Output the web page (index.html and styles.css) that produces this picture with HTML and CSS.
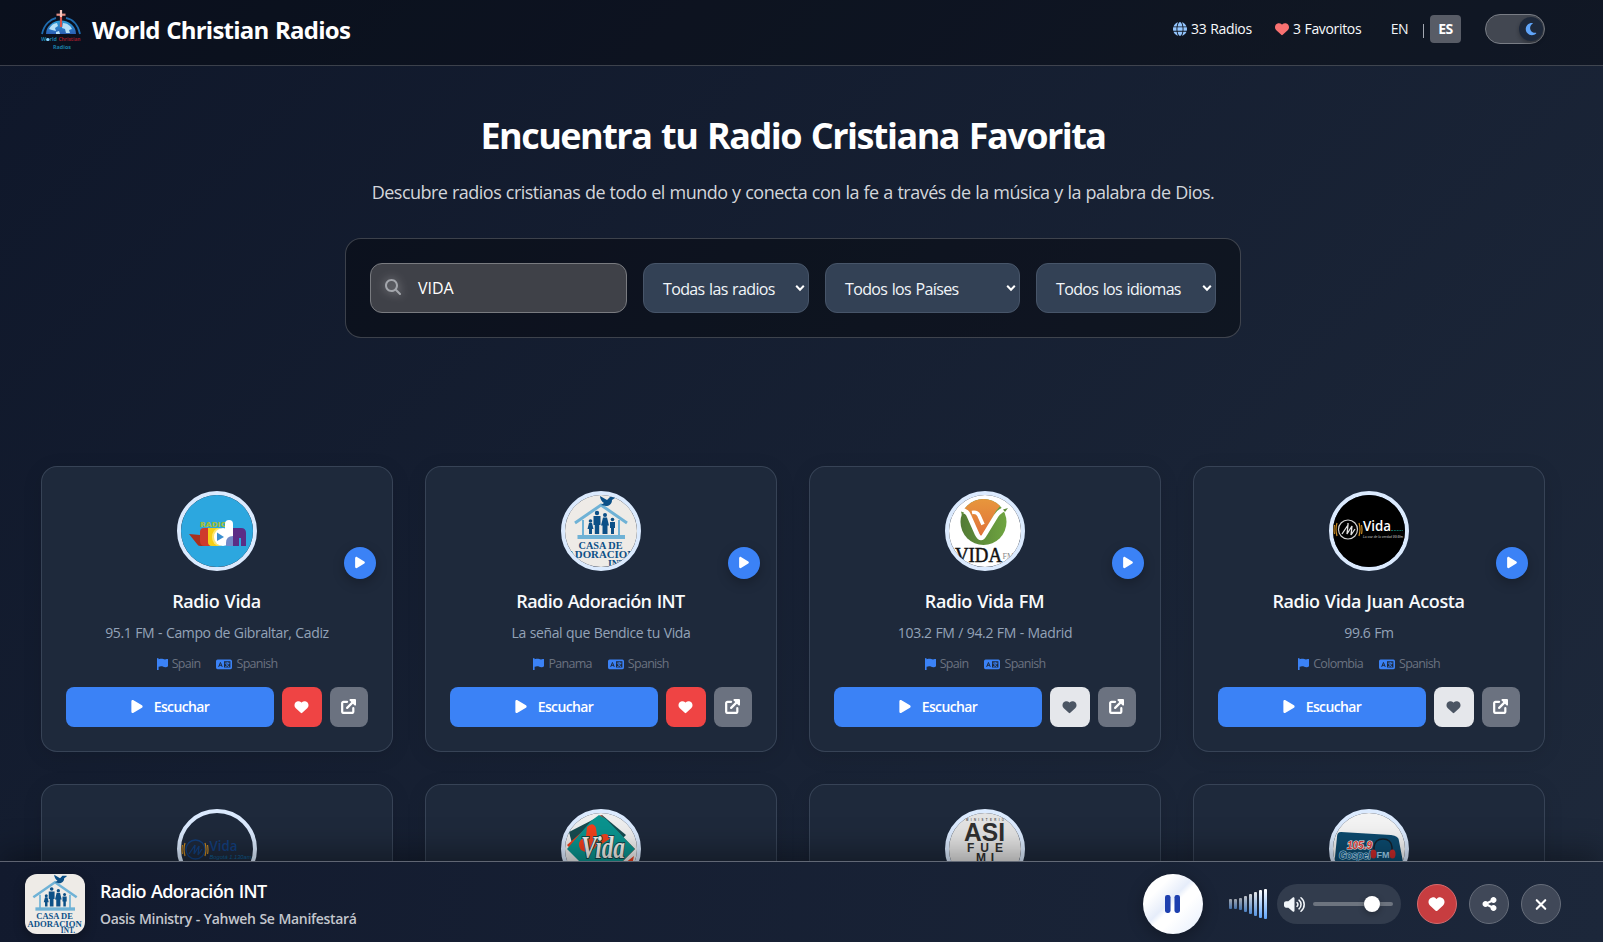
FILE: index.html
```html
<!DOCTYPE html>
<html lang="es">
<head>
<meta charset="utf-8">
<title>World Christian Radios</title>
<link rel="stylesheet" href="styles.css">
</head>
<body>
<svg class="defs" width="0" height="0" aria-hidden="true">
  <defs>
    <linearGradient id="sun" x1="0" y1="0" x2="0" y2="1"><stop offset="0" stop-color="#e89a3c"/><stop offset="1" stop-color="#e0703a"/></linearGradient>
    <linearGradient id="leaf"><stop offset="0" stop-color="#527a35"/><stop offset="1" stop-color="#6fa541"/></linearGradient>
    <linearGradient id="globe-fill" x1="0" y1="0" x2="0" y2="1"><stop offset="0" stop-color="#2a9fd9"/><stop offset="1" stop-color="#2c5fb4"/></linearGradient>
    <clipPath id="vf-disc"><circle cx="34.500" cy="27" r="23"/></clipPath>
  </defs>
  <symbol id="i-heart" viewBox="0 0 512 512"><path d="M47.6 300.4L228.3 469.1c7.5 7 17.4 10.9 27.7 10.9s20.2-3.9 27.7-10.9L464.4 300.4c30.4-28.3 47.6-68 47.6-109.5v-5.8c0-69.9-50.5-129.5-119.4-141C347 36.5 300.6 51.4 268 84L256 96 244 84c-32.6-32.6-79-47.5-124.6-39.9C50.5 55.6 0 115.2 0 185.1v5.8c0 41.5 17.2 81.2 47.6 109.5z"/></symbol>
  <symbol id="i-play" viewBox="0 0 384 512"><path d="M73 39c-14.8-9.1-33.4-9.4-48.5-.9S0 62.6 0 80V432c0 17.4 9.4 33.4 24.5 41.9s33.7 8.1 48.5-.9L361 297c14.3-8.7 23-24.2 23-41s-8.7-32.2-23-41L73 39z"/></symbol>
  <symbol id="i-globe" viewBox="0 0 512 512"><path d="M352 256c0 22.2-1.2 43.6-3.3 64H163.3c-2.2-20.4-3.3-41.8-3.3-64s1.2-43.6 3.3-64H348.7c2.2 20.4 3.3 41.8 3.3 64zm28.8-64H503.9c5.3 20.5 8.1 41.9 8.1 64s-2.8 43.5-8.1 64H380.8c2.1-20.6 3.2-42 3.2-64s-1.1-43.4-3.2-64zm112.6-32H376.7c-10-63.9-29.8-117.4-55.3-151.6c78.3 20.7 142 77.5 171.9 151.6zm-149.1 0H167.7c6.1-36.4 15.5-68.6 27-94.7c10.5-23.6 22.2-40.7 33.5-51.5C239.4 3.2 248.7 0 256 0s16.6 3.2 27.8 13.8c11.3 10.8 23 27.9 33.5 51.5c11.6 26 20.9 58.2 27 94.7zm-209 0H18.6C48.6 85.9 112.2 29.1 190.6 8.4C165.1 42.6 145.3 96.1 135.3 160zM8.1 192H131.2c-2.1 20.6-3.2 42-3.2 64s1.1 43.4 3.2 64H8.1C2.8 299.5 0 278.1 0 256s2.8-43.5 8.1-64zM194.7 446.6c-11.6-26-20.9-58.2-27-94.6H344.3c-6.1 36.4-15.5 68.6-27 94.6c-10.5 23.6-22.2 40.7-33.5 51.5C272.6 508.8 263.3 512 256 512s-16.6-3.2-27.8-13.8c-11.3-10.8-23-27.9-33.5-51.5zM135.3 352c10 63.9 29.8 117.4 55.3 151.6C112.2 482.9 48.6 426.1 18.6 352H135.3zm358.1 0c-30 74.1-93.6 130.9-171.9 151.6c25.5-34.2 45.2-87.7 55.3-151.6H493.4z"/></symbol>
  <symbol id="i-moon" viewBox="0 0 384 512"><path d="M223.5 32C100 32 0 132.3 0 256S100 480 223.5 480c60.6 0 115.5-24.2 155.8-63.4c5-4.9 6.3-12.5 3.1-18.7s-10.1-9.7-17-8.5c-9.8 1.7-19.8 2.6-30.1 2.6c-96.9 0-175.5-78.8-175.5-176c0-65.8 36-123.1 89.3-153.3c6.1-3.5 9.2-10.5 7.7-17.3s-7.3-11.9-14.3-12.5c-6.3-.5-12.6-.8-19-.8z"/></symbol>
  <symbol id="i-search" viewBox="0 0 512 512"><path d="M416 208c0 45.9-14.9 88.3-40 122.7L502.6 457.4c12.5 12.5 12.5 32.8 0 45.3s-32.8 12.5-45.3 0L330.7 376c-34.4 25.2-76.8 40-122.7 40C93.1 416 0 322.9 0 208S93.1 0 208 0S416 93.1 416 208zM208 352a144 144 0 1 0 0-288 144 144 0 1 0 0 288z"/></symbol>
  <symbol id="i-flag" viewBox="0 0 448 512"><path d="M64 32C64 14.3 49.7 0 32 0S0 14.3 0 32V480c0 17.7 14.3 32 32 32s32-14.3 32-32V352l64.3-16.1c41.1-10.3 84.6-5.5 122.5 13.4c44.2 22.1 95.5 24.8 141.7 7.4l34.7-13c12.5-4.7 20.8-16.6 20.8-30V66.1c0-23-24.2-38-44.8-27.7l-9.6 4.8c-46.3 23.2-100.8 23.2-147.1 0c-35.1-17.6-75.4-22-113.5-12.5L64 48V32z"/></symbol>
  <symbol id="i-lang" viewBox="0 0 640 512"><path fill-rule="evenodd" d="M64 64h512a64 64 0 0 1 64 64v256a64 64 0 0 1-64 64H64a64 64 0 0 1-64-64V128a64 64 0 0 1 64-64zM320 128v256h256V128z"/><path d="M112 342l66-164 66 164M138 292h80" fill="none" stroke="#1e293b" stroke-width="38" stroke-linecap="round"/><path d="M368 206h160M448 172v30M500 210c-18 66-58 112-114 134M408 258c22 40 58 68 104 84" fill="none" stroke="currentColor" stroke-width="38" stroke-linecap="round"/></symbol>
  <symbol id="i-ext" viewBox="0 0 512 512"><path d="M208 96H84a44 44 0 0 0-44 44v292a44 44 0 0 0 44 44h292a44 44 0 0 0 44-44V312M210 302L430 82" fill="none" stroke="currentColor" stroke-width="76" stroke-linecap="round"/><path d="M320 0h160a32 32 0 0 1 32 32v160c0 28-34 42-54 22L298 54c-20-20-6-54 22-54z"/></symbol>
  <symbol id="i-share" viewBox="0 0 448 512"><path d="M352 224c53 0 96-43 96-96s-43-96-96-96s-96 43-96 96c0 4 .2 8 .7 11.9l-94.1 47C145.4 170.2 121.9 160 96 160c-53 0-96 43-96 96s43 96 96 96c25.9 0 49.4-10.2 66.6-26.9l94.1 47c-.5 3.9-.7 7.8-.7 11.9c0 53 43 96 96 96s96-43 96-96s-43-96-96-96c-25.9 0-49.4 10.2-66.6 26.9l-94.1-47c.5-3.9 .7-7.8 .7-11.9s-.2-8-.7-11.9l94.1-47C302.6 213.8 326.1 224 352 224z"/></symbol>
  <symbol id="i-volume" viewBox="0 0 640 512"><path d="M301.1 34.8C312.6 40 320 51.4 320 64V448c0 12.6-7.4 24-18.9 29.2s-25 3.1-34.4-5.3L131.8 352H64c-35.3 0-64-28.7-64-64V224c0-35.3 28.7-64 64-64h67.8L266.7 40.1c9.4-8.4 22.9-10.4 34.4-5.3z"/><path d="M397 199a74 74 0 0 1 0 114M458 125a170 170 0 0 1 0 262M518 50a266 266 0 0 1 0 412" fill="none" stroke="currentColor" stroke-width="48" stroke-linecap="round"/></symbol>
  <symbol id="i-pause" viewBox="0 0 320 512"><rect y="64" width="118" height="384" rx="46"/><rect x="202" y="64" width="118" height="384" rx="46"/></symbol>
  <symbol id="i-x" viewBox="0 0 384 512"><path d="M64 128l256 256M320 128L64 384" fill="none" stroke="currentColor" stroke-width="64" stroke-linecap="round"/></symbol>
  <symbol id="casa" viewBox="0 0 72 72">
    <rect width="72" height="72" fill="#eeebe7"/>
    <path d="M10 28L36 10l26 18" fill="none" stroke="#6fb2d6" stroke-width="3"/>
    <path d="M18 25v17M54 25v17" stroke="#6fb2d6" stroke-width="2"/>
    <rect x="12.500" y="40" width="47.500" height="4" fill="#6fb2d6"/>
    <g fill="#0c5087"><path d="M35 1l7 4 3-3h5v1l-3 2c0 4-3 6-6 6l-5-1 3-2c-2-1-4-4-4-7z"/>
      <circle cx="32" cy="18" r="2.200"/><path d="M28.500 21h7v9h-1.300v9h-4.400v-9h-1.300z"/>
      <circle cx="40" cy="20" r="2"/><path d="M38 22.500h4l2 8h-1.500v8.500h-5v-8.500H36z"/>
      <circle cx="25.500" cy="26" r="1.800"/><path d="M24 28h3l1.500 6h-1.500v5h-3v-5h-1.500z"/>
      <circle cx="47.500" cy="24.500" r="1.800"/><path d="M45 27h5v6h-1v6h-3v-6h-1z"/></g>
  </symbol>
</svg>

<header class="topbar">
  <div class="brand">
    <svg class="brand-logo" viewBox="0 0 40 40">
      <path d="M5 24a15 13.500 0 0 1 30 0z" fill="url(#globe-fill)"/>
      <path d="M8 19c2-4 5-6 8-6l1 3-3 2 1 3-4-1zM22 13c4 0 8 3 9 6l-3 1 1 3h-4l-1-4-3-1zM15 22l3-1 1 3h-4z" fill="#b6e0f6"/>
      <path d="M1 24C3 14 10 9 15 8M39 24C37 14 31 9 25 8" fill="none" stroke="#1e6bae" stroke-width="1.800"/>
      <path d="M20 4v13" stroke="#d4554c" stroke-width="2.200"/><path d="M15.500 4.700h9" stroke="#e58f84" stroke-width="2.200"/><path d="M20 0v7" stroke="#f2c6be" stroke-width="2.200"/>
      <text x="0" y="31.200" class="logo-a" textLength="16" lengthAdjust="spacingAndGlyphs">World</text><circle cx="6.800" cy="29.500" r="1.600" fill="#8fd6ff"/>
      <text x="17.500" y="31.200" class="logo-b" textLength="22" lengthAdjust="spacingAndGlyphs">Christian</text>
      <text x="12" y="38.600" class="logo-a" textLength="18" lengthAdjust="spacingAndGlyphs">Radios</text>
    </svg>
    <span class="brand-name">World Christian Radios</span>
  </div>
  <nav class="top-actions">
    <span class="stat"><svg class="ic-globe"><use href="#i-globe"/></svg>33 Radios</span>
    <span class="stat fav"><svg class="ic-fav"><use href="#i-heart"/></svg>3 Favoritos</span>
    <div class="langs"><span class="lang">EN</span><span class="sep"></span><span class="lang on">ES</span></div>
    <div class="toggle"><span class="knob"><svg><use href="#i-moon"/></svg></span></div>
  </nav>
</header>

<main class="page">
  <section class="hero">
    <h1>Encuentra tu Radio Cristiana Favorita</h1>
    <p>Descubre radios cristianas de todo el mundo y conecta con la fe a través de la música y la palabra de Dios.</p>
    <div class="panel">
      <div class="search"><svg><use href="#i-search"/></svg><span>VIDA</span></div>
      <div class="select s1"><span>Todas las radios</span><svg class="chev" viewBox="0 0 10 8"><path d="M1.200 1.800L5 5.800l3.800-4"/></svg></div>
      <div class="select s2"><span>Todos los Países</span><svg class="chev" viewBox="0 0 10 8"><path d="M1.200 1.800L5 5.800l3.800-4"/></svg></div>
      <div class="select s3"><span>Todos los idiomas</span><svg class="chev" viewBox="0 0 10 8"><path d="M1.200 1.800L5 5.800l3.800-4"/></svg></div>
    </div>
  </section>

  <section class="grid">
    <article class="card">
      <div class="avatar"><svg viewBox="0 0 72 72"><rect width="72" height="72" fill="#2ca7df"/>
        <text x="19" y="31.500" class="v-radio" textLength="27" lengthAdjust="spacingAndGlyphs">RADIO</text>
        <path d="M8 39l11 1 5 11h-5q-2 0-3-2z" fill="#a8301f"/><path d="M19 37q0-4 4-4h6v18h-5q-5 0-5-5z" fill="#cf3a2c"/><path d="M27 33h10v18h-6q-4 0-4-4z" fill="#f6cf16"/><ellipse cx="38" cy="42" rx="7" ry="9" fill="#fbe774"/><circle cx="42" cy="42" r="9" fill="#fff"/><rect x="44" y="25" width="8" height="26" rx="4" fill="#fff"/><path d="M36 37.500l7 4.500-7 4z" fill="#3a8fd0"/><path d="M45 51v-3q0-7 7-7v10z" fill="#7389c8"/><path d="M52 33h8q5 0 5 5v13H52z" fill="#5b2d86"/><path d="M59 43v8" stroke="#2ca7df" stroke-width="2"/></svg></div>
      <button class="quick"><svg><use href="#i-play"/></svg></button>
      <h3>Radio Vida</h3><p class="desc">95.1 FM - Campo de Gibraltar, Cadiz</p>
      <div class="meta"><span><svg class="ic-flag"><use href="#i-flag"/></svg>Spain</span><span><svg class="ic-lang"><use href="#i-lang"/></svg>Spanish</span></div>
      <div class="row"><button class="listen"><svg><use href="#i-play"/></svg>Escuchar</button><button class="like on"><svg><use href="#i-heart"/></svg></button><button class="ext"><svg><use href="#i-ext"/></svg></button></div>
    </article>
    <article class="card">
      <div class="avatar"><svg viewBox="0 0 72 72"><use href="#casa"/>
        <text x="13.500" y="54" class="c-txt" textLength="44" lengthAdjust="spacingAndGlyphs">CASA DE</text><text x="2" y="63" class="c-txt" textLength="68" lengthAdjust="spacingAndGlyphs">ADORACION</text><text x="43" y="71.500" class="c-txt" textLength="19" lengthAdjust="spacingAndGlyphs">INT.</text></svg></div>
      <button class="quick"><svg><use href="#i-play"/></svg></button>
      <h3 class="tight">Radio Adoración INT</h3><p class="desc">La señal que Bendice tu Vida</p>
      <div class="meta"><span><svg class="ic-flag"><use href="#i-flag"/></svg>Panama</span><span><svg class="ic-lang"><use href="#i-lang"/></svg>Spanish</span></div>
      <div class="row"><button class="listen"><svg><use href="#i-play"/></svg>Escuchar</button><button class="like on"><svg><use href="#i-heart"/></svg></button><button class="ext"><svg><use href="#i-ext"/></svg></button></div>
    </article>
    <article class="card">
      <div class="avatar"><svg viewBox="0 0 72 72"><rect width="72" height="72" fill="#fff"/>
        <g clip-path="url(#vf-disc)"><rect x="11" y="4" width="47" height="46" fill="url(#leaf)"/><path d="M10 0h50L47 16 32 44 20 17 10 12z" fill="url(#sun)"/></g>
        <path d="M12 16q6-1 8 5l8 18q4 8 8 0l11-18q5-7 12-8" fill="none" stroke="#fff" stroke-width="4.600"/>
        <path d="M23 17.500q5-1 7 3l4 9" fill="none" stroke="#fff" stroke-width="3.600"/>
        <path d="M12 16.500l3 1-2 3zM54 14.500l5-1.500-3 4z" fill="#5f8c3a"/>
        <text x="6" y="67" class="vf-txt" textLength="47" lengthAdjust="spacingAndGlyphs">VIDA</text><text x="53.500" y="64" class="vf-fm">FM</text></svg></div>
      <button class="quick"><svg><use href="#i-play"/></svg></button>
      <h3>Radio Vida FM</h3><p class="desc">103.2 FM / 94.2 FM - Madrid</p>
      <div class="meta"><span><svg class="ic-flag"><use href="#i-flag"/></svg>Spain</span><span><svg class="ic-lang"><use href="#i-lang"/></svg>Spanish</span></div>
      <div class="row"><button class="listen"><svg><use href="#i-play"/></svg>Escuchar</button><button class="like"><svg><use href="#i-heart"/></svg></button><button class="ext"><svg><use href="#i-ext"/></svg></button></div>
    </article>
    <article class="card">
      <div class="avatar"><svg viewBox="0 0 72 72"><rect width="72" height="72" fill="#000"/>
        <circle cx="15" cy="34.500" r="9.500" fill="none" stroke="#d0d0d0" stroke-width="1.200"/><path d="M9 39l6-9-1 9 5-8-1 9 4-6M15 28v2" fill="none" stroke="#e4e4e4" stroke-width="1.300"/>
        <path d="M4 28q-2 6 0 13M1.500 30q-1 5 0 9M26 28q2 6 0 13M28.500 30q1 5 0 9" fill="none" stroke="#c98a22" stroke-width="1.200"/>
        <text x="30" y="35.500" class="j-txt" textLength="28" lengthAdjust="spacingAndGlyphs">Vida</text><path d="M58 35.500h12" stroke="#0e6b60" stroke-width="1.200" stroke-dasharray="2 .8"/>
        <text x="30" y="42.500" class="j-sub" textLength="40" lengthAdjust="spacingAndGlyphs">La voz de la verdad 99.6fm</text></svg></div>
      <button class="quick"><svg><use href="#i-play"/></svg></button>
      <h3>Radio Vida Juan Acosta</h3><p class="desc">99.6 Fm</p>
      <div class="meta"><span><svg class="ic-flag"><use href="#i-flag"/></svg>Colombia</span><span><svg class="ic-lang"><use href="#i-lang"/></svg>Spanish</span></div>
      <div class="row"><button class="listen"><svg><use href="#i-play"/></svg>Escuchar</button><button class="like"><svg><use href="#i-heart"/></svg></button><button class="ext"><svg><use href="#i-ext"/></svg></button></div>
    </article>

    <article class="card">
      <div class="avatar"><svg viewBox="0 0 72 72">
        <circle cx="14.500" cy="36.500" r="9.500" fill="none" stroke="#123f7d" stroke-width="1.300"/><path d="M8 41l6-9-1 9 5-8-1 9 4-6" fill="none" stroke="#123f7d" stroke-width="1.300"/>
        <path d="M4 30q-2 6 0 13M1.500 32q-1 5 0 9M24 30q2 6 0 13M26.500 32q1 5 0 9" fill="none" stroke="#c98a22" stroke-width="1.200"/>
        <text x="28.500" y="38" class="b-txt" textLength="28" lengthAdjust="spacingAndGlyphs">Vida</text><text x="28.500" y="45.500" class="b-sub" textLength="42" lengthAdjust="spacingAndGlyphs">Bogotá 1.130am</text></svg></div>
    </article>
    <article class="card">
      <div class="avatar"><svg viewBox="0 0 72 72"><rect width="72" height="72" fill="#eee"/>
        <path d="M4 19L37 2l24 20-8 8L8 34z" fill="#164b50"/><path d="M2 32L36 2l34 34-34 34z" fill="#f0401c"/><path d="M2 36L26 8 34 2l7 4 29 30-34 34z" fill="#0a938e"/>
        <path d="M22 14q6-6 9 1l2 16q-8 12-17 6-6-8 5-14zM34 23q8-5 12 2l-12 8z" fill="#f0401c"/><path d="M60 50l9-7-3 14-9-1z" fill="#f0401c"/>
        <text x="16" y="45" class="t-txt" textLength="44" lengthAdjust="spacingAndGlyphs">Vida</text></svg></div>
    </article>
    <article class="card">
      <div class="avatar"><svg viewBox="0 0 72 72"><rect width="72" height="72" fill="#e3e3e3"/>
        <text x="17" y="8" class="a-min" textLength="38">MINISTERIO</text>
        <text x="15" y="28" class="a-asi" textLength="41" lengthAdjust="spacingAndGlyphs">ASI</text><text x="18" y="38.500" class="a-fue" textLength="36">FUE</text><text x="27" y="49" class="a-fue" textLength="18">MI</text></svg></div>
    </article>
    <article class="card">
      <div class="avatar"><svg viewBox="0 0 72 72"><rect width="72" height="72" fill="#f3f3f3"/>
        <path d="M8 19l50 3q8 1 8 6l5 26H1l3-30q0-5 4-5z" fill="#0c4a6e"/>
        <text x="14" y="36" class="g-num" textLength="25" lengthAdjust="spacingAndGlyphs">105.9</text>
        <text x="6" y="46" class="g-gos" textLength="32" lengthAdjust="spacingAndGlyphs">Gospel</text>
        <path d="M41 40V34q1-8 9-8t9 8v6" fill="none" stroke="#15202b" stroke-width="1.500"/><ellipse cx="40.500" cy="41" rx="3" ry="4.500" fill="#c92a2a"/><ellipse cx="59.500" cy="41" rx="3" ry="4.500" fill="#c92a2a"/>
        <text x="43.500" y="44.500" class="g-fm" textLength="13" lengthAdjust="spacingAndGlyphs">FM</text></svg></div>
    </article>
  </section>
</main>

<footer class="player">
  <svg class="art" viewBox="0 0 72 72"><use href="#casa"/>
    <text x="13.500" y="54" class="c-txt" textLength="44" lengthAdjust="spacingAndGlyphs">CASA DE</text><text x="3" y="63" class="c-txt" textLength="65" lengthAdjust="spacingAndGlyphs">ADORACION</text><text x="43" y="71" class="c-txt" textLength="17" lengthAdjust="spacingAndGlyphs">INT.</text></svg>
  <div class="now"><div class="now-title">Radio Adoración INT</div><div class="now-sub">Oasis Ministry - Yahweh Se Manifestará</div></div>
  <button class="pause"><svg><use href="#i-pause"/></svg></button>
  <div class="bars"><i class="b1"></i><i class="b2"></i><i class="b3"></i><i class="b4"></i><i class="b5"></i><i class="b6"></i><i class="b7"></i><i class="b8"></i></div>
  <div class="volume"><svg><use href="#i-volume"/></svg><div class="track"><span class="thumb"></span></div></div>
  <div class="round-group">
    <button class="round red"><svg class="r-heart"><use href="#i-heart"/></svg></button>
    <button class="round"><svg class="r-share"><use href="#i-share"/></svg></button>
    <button class="round"><svg class="r-x"><use href="#i-x"/></svg></button>
  </div>
</footer>
</body>
</html>
```
FILE: styles.css
```css
* { box-sizing: border-box; }
body {
  margin: 0;
  height: 942px;
  overflow: hidden;
  position: relative;
  font-family: "Open Sans", "Noto Sans", sans-serif;
  color: #f1f5f9;
  background: linear-gradient(135deg, #0f172a 0%, #1e293b 100%);
}
svg { display: block; fill: currentColor; flex: none; }
.defs { position: absolute; }
h1, h3, p { margin: 0; }
button { border: 0; padding: 0; font: inherit; color: #fff; display: flex; align-items: center; justify-content: center; flex: none; }

/* Header */
.topbar {
  height: 66px;
  padding: 0 58px 6px 41px;
  display: flex;
  align-items: center;
  justify-content: space-between;
  background: rgba(0, 0, 0, .3);
  border-bottom: 1px solid rgba(255, 255, 255, .2);
}
.brand { display: flex; align-items: center; gap: 11px; }
.brand-logo { width: 40px; height: 40px; }
.logo-a { font: 700 6px "Open Sans", sans-serif; fill: #1b7fa6; }
.logo-b { font: 700 6px "Open Sans", sans-serif; fill: #9a1c2a; }
.brand-name { font-size: 24px; font-weight: 700; letter-spacing: -.76px; word-spacing: 1px; line-height: 32px; color: #fff; }
.top-actions { display: flex; align-items: center; }
.stat { display: flex; align-items: center; gap: 4px; font-size: 14px; font-weight: 500; letter-spacing: -.33px; word-spacing: .5px; line-height: 20px; margin-top: -1px; width: 102px; color: #f8fafc; }
.stat.fav { width: 108px; }
.ic-globe { width: 14px; height: 14px; color: #93c5fd; }
.ic-fav { width: 14px; height: 14px; color: #f87171; }
.langs { display: flex; align-items: center; margin-top: -1px; }
.lang { font-size: 14px; font-weight: 500; letter-spacing: -.3px; width: 31px; height: 28px; line-height: 27px; text-align: center; border-radius: 4px; padding-left: 2px; }
.lang.on { font-weight: 700; letter-spacing: -.6px; background: #585c66; color: #fff; margin-left: -1px; padding: 0; }
.sep { width: 1px; height: 14px; background: #a3a8b2; margin: 3px 7px 0 9px; }
.toggle { width: 60px; height: 30px; margin-top: -1px; margin-left: 24px; border-radius: 15px; border: 1px solid #797d85; background: #424751; display: flex; align-items: center; justify-content: flex-end; padding-right: 1px; }
.knob { width: 24px; height: 24px; border-radius: 50%; background: #1e293b; display: flex; align-items: center; justify-content: center; color: #60a5fa; box-shadow: 0 2px 4px rgba(0, 0, 0, .3); }
.knob svg { width: 12px; height: 14px; }

/* Hero */
.page { height: 876px; overflow: hidden; padding: 43px 58px 0 41px; }
.hero { display: flex; flex-direction: column; align-items: center; }
.hero h1 { font-size: 36px; font-weight: 700; line-height: 54px; letter-spacing: -1.52px; word-spacing: 1.900px; color: #fff; white-space: nowrap; }
.hero p { margin-top: 15px; font-size: 18px; line-height: 28px; letter-spacing: -.53px; word-spacing: .52px; color: #d3d6db; white-space: nowrap; }
.panel { margin-top: 32px; width: 896px; height: 100px; border: 1px solid rgba(255, 255, 255, .2); border-radius: 16px; background: rgba(0, 0, 0, .35); padding: 24px; display: flex; gap: 16px; }
.search { width: 257px; height: 50px; border: 1px solid #797b80; border-radius: 12px; background: #3f4148; display: flex; align-items: center; gap: 17px; padding-left: 14px; font-size: 16px; color: #fff; }
.search svg { width: 16px; height: 16px; margin-top: -2px; color: #a3a6ac; filter: drop-shadow(0 0 5px rgba(255, 255, 255, .5)); }
.select { height: 50px; border: 1px solid #475569; border-radius: 12px; background: #334155; display: flex; align-items: center; justify-content: space-between; padding: 2px 3px 0 19px; font-size: 16px; letter-spacing: -.65px; word-spacing: 1px; white-space: nowrap; color: #f1f5f9; }
.s1 { width: 166px; }
.s2 { width: 195px; }
.s3 { width: 180px; }
.chev { width: 10px; height: 8px; margin-top: -3px; fill: none; stroke: #fff; stroke-width: 2; }

/* Cards */
.grid { margin-top: 128px; display: grid; grid-template-columns: repeat(4, 352px); gap: 32px; }
.card { position: relative; height: 286px; padding: 24px; border: 1px solid rgba(71, 85, 105, .6); border-radius: 16px; background: #1e293b; box-shadow: 0 4px 20px rgba(0, 0, 0, .1); text-align: center; }
.avatar { width: 80px; height: 80px; margin: 0 auto; border: 4px solid #dbeafe; border-radius: 50%; overflow: hidden; }
.avatar svg { width: 72px; height: 72px; }
.quick { position: absolute; right: 16px; top: 80px; width: 32px; height: 32px; border-radius: 50%; background: #3b82f6; box-shadow: 0 4px 12px rgba(0, 0, 0, .25); }
.quick svg { width: 10px; height: 13px; margin: -1px 1px 0 0; }
.card h3 { margin: 17px 1px 0 0; font-size: 18px; font-weight: 600; line-height: 27px; letter-spacing: -.4px; word-spacing: 1px; color: #f8fafc; }
.card h3.tight { letter-spacing: -.55px; }
.desc { margin-top: 7px; font-size: 14px; line-height: 21px; letter-spacing: -.37px; word-spacing: .5px; color: #94a3b8; }
.meta { margin-top: 11px; height: 20px; display: flex; justify-content: center; gap: 16px; font-size: 12.500px; line-height: 20px; letter-spacing: -.7px; color: #6b7280; }
.meta span { display: flex; align-items: center; gap: 4px; }
.meta svg { color: #3b82f6; }
.ic-flag { width: 11.200px; height: 12.800px; }
.ic-lang { width: 16px; height: 12.800px; }
.row { margin-top: 13px; display: flex; gap: 8px; }
.row button { height: 40px; border-radius: 8px; padding-bottom: 1px; }
.listen { width: 208px; gap: 11px; background: #3b82f6; font-size: 14px; font-weight: 600; letter-spacing: -.62px; }
.listen svg { width: 12px; height: 15px; }
.like { width: 40px; background: #e5e7eb; }
.row .like { color: #4b5563; padding-right: 1px; }
.row .like.on { background: #ef4444; color: #fff; }
.like svg { width: 15px; height: 14px; }
.row .ext { width: 38px; background: #6b7280; padding-right: 1px; }
.ext svg { width: 15px; height: 15px; }

/* Station logo lettering */
.v-radio { font: 800 7.500px "Open Sans", sans-serif; fill: #a3bf3a; }
.c-txt { font: 700 10px "Liberation Serif", serif; fill: #0c5087; }
.vf-txt { font: 400 20px "Liberation Serif", serif; fill: #111; stroke: #111; stroke-width: .5px; }
.vf-fm { font: 8px "Liberation Serif", serif; fill: #888; }
.j-txt { font: 600 14px "Open Sans", sans-serif; fill: #fff; }
.j-sub { font: italic 3.500px "Liberation Sans", sans-serif; fill: #ccc; }
.b-txt { font: 600 14px "Open Sans", sans-serif; fill: #123f7d; }
.b-sub { font: italic 6px "Liberation Sans", sans-serif; fill: #0e5f94; }
.t-txt { font: italic 700 31px "Liberation Serif", serif; fill: #f0eee9; stroke: #12444a; stroke-width: 2px; paint-order: stroke; }
.a-min { font: 700 2.800px "Liberation Sans", sans-serif; fill: #555; }
.a-asi { font: 700 25px "Liberation Sans", sans-serif; fill: #303030; }
.a-fue { font: 700 12px "Liberation Sans", sans-serif; fill: #303030; }
.g-num { font: italic 700 11px "Liberation Sans", sans-serif; fill: #e23d36; stroke: #fff; stroke-width: 1.200px; paint-order: stroke; }
.g-gos { font: italic 700 11px "Liberation Sans", sans-serif; fill: #0c5f92; stroke: #bfe3f7; stroke-width: 1.200px; paint-order: stroke; }
.g-fm { font: 700 9px "Liberation Sans", sans-serif; fill: #9fd3f0; }

/* Player bar, pinned over the page */
.player { position: absolute; left: 0; right: 0; bottom: 0; height: 81px; padding: 4px 42px 0 25px; border-top: 1px solid rgba(255, 255, 255, .32); background: linear-gradient(100deg, #121a2e, #1c273a); box-shadow: 0 -8px 32px rgba(0, 0, 0, .38); display: flex; align-items: center; }
.art { width: 60px; height: 60px; border-radius: 12px; box-shadow: 0 4px 12px rgba(0, 0, 0, .3); }
.now { margin-left: 15px; flex: 1; white-space: nowrap; }
.now-title { font-size: 18px; font-weight: 600; line-height: 28px; letter-spacing: -.65px; word-spacing: 1px; color: #fff; margin-top: -1px; }
.now-sub { font-size: 14px; font-weight: 600; line-height: 20px; margin-top: 4px; margin-bottom: 1px; letter-spacing: -.31px; word-spacing: .5px; color: #c3c6cd; }
.pause { width: 60px; height: 60px; border-radius: 50%; color: #1e40af; background: linear-gradient(135deg, #fff 25%, #e6edfa 45%, #fff 52%, #fff 62%, #e4edfc); box-shadow: 0 4px 16px rgba(0, 0, 0, .3); }
.pause svg { width: 15px; height: 24px; margin-right: 1px; }
.bars { margin-left: 26px; width: 38px; height: 30px; display: flex; align-items: center; gap: 2px; }
.bars i { width: 3px; border-radius: 1px; background: linear-gradient(#fff, #60a5fa); }
.b1 { height: 10px; opacity: .6; } .b2 { height: 10px; opacity: .6; }
.b3 { height: 12px; opacity: .62; } .b4 { height: 16px; opacity: .72; }
.b5 { height: 20px; opacity: .8; } .b6 { height: 24px; opacity: .88; }
.b7 { height: 28px; } .b8 { height: 30px; }
.volume { margin-left: 10px; width: 124px; height: 40px; border-radius: 20px; background: #323c4d; display: flex; align-items: center; gap: 8px; padding-left: 7px; }
.volume svg { width: 21px; height: 17px; }
.track { position: relative; width: 80px; height: 4px; border-radius: 2px; background: #6d747f; }
.thumb { position: absolute; left: 51px; top: -6px; width: 16px; height: 16px; border-radius: 50%; background: #fff; box-shadow: 0 2px 6px rgba(0, 0, 0, .3); }
.round-group { margin-left: 16px; display: flex; gap: 12px; }
.round { width: 40px; height: 40px; border-radius: 50%; border: 1px solid #666d7a; background: #404858; }
.round.red { background: #c73d40; border-color: #d56a6d; }
.r-heart { width: 17px; height: 16px; margin-right: 1px; }
.r-share { width: 15px; height: 16px; }
.r-x { width: 14px; height: 17px; margin-right: 1px; }
```
